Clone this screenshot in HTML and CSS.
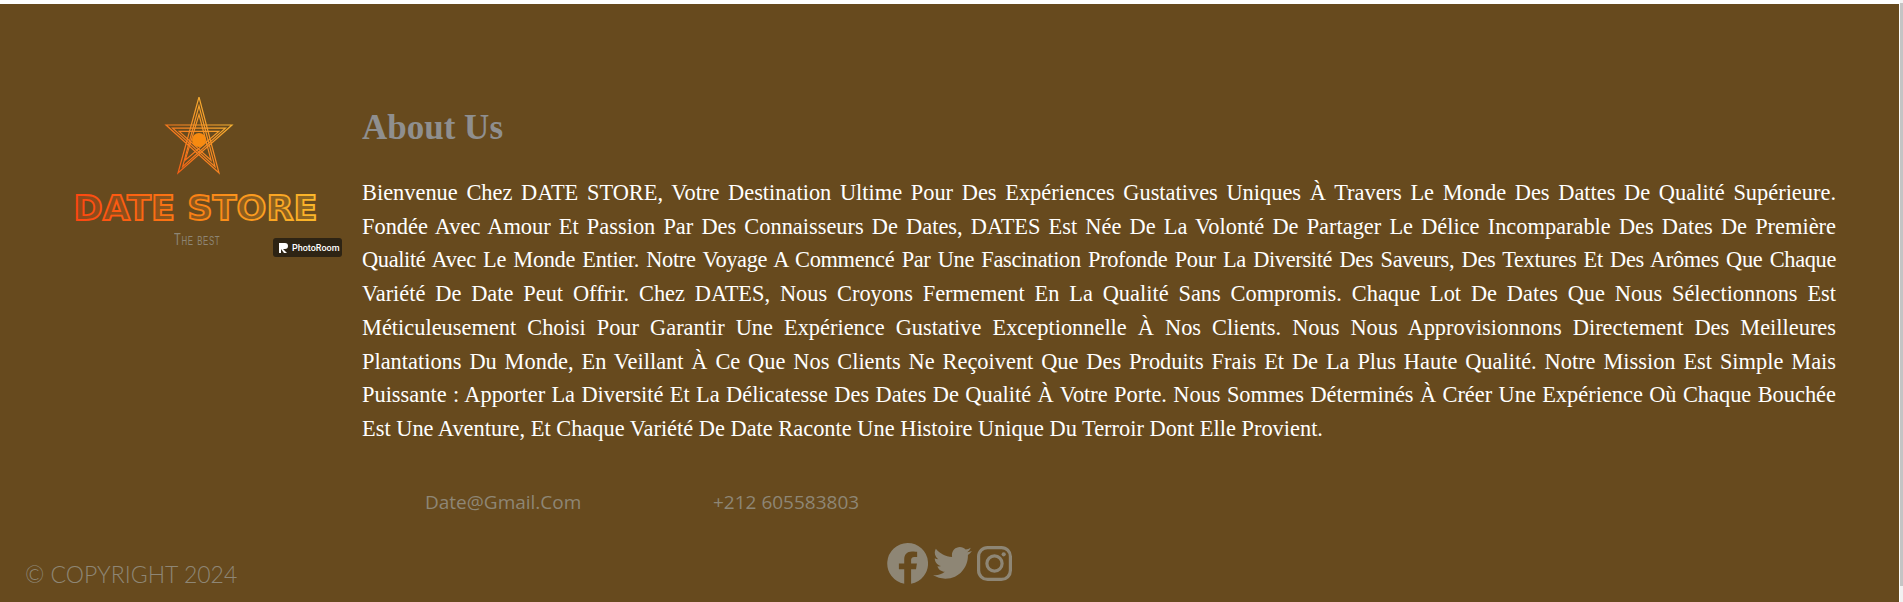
FILE: index.html
```html
<!DOCTYPE html>
<html lang="fr">
<head>
    <meta charset="UTF-8">
    <meta name="viewport" content="width=device-width, initial-scale=1.0">
    <title>Date Store - About Us</title>
    <link rel="stylesheet" href="styles.css">
</head>
<body>
    <footer class="footer">
        <div class="about-row">
            <div class="logo">
                <svg class="logo-art" width="250" height="130" viewBox="0 0 250 130">
                    <defs>
                        <linearGradient id="logoGrad" x1="0" y1="0" x2="244" y2="0" gradientUnits="userSpaceOnUse">
                            <stop offset="0" stop-color="#ff4510"/>
                            <stop offset="0.5" stop-color="#fb8114"/>
                            <stop offset="1" stop-color="#fbb92b"/>
                        </linearGradient>
                        <linearGradient id="starGrad" x1="95" y1="70" x2="158" y2="15" gradientUnits="userSpaceOnUse">
                            <stop offset="0" stop-color="#f55a12"/>
                            <stop offset="1" stop-color="#f7bb35"/>
                        </linearGradient>
                    </defs>
                    <g fill="none" stroke="url(#starGrad)" stroke-width="1.200">
                        <path d="M126 0 L146 76 L93 28 L159 28 L105 76 Z"/>
                        <path d="M126 8.800 L142 69.600 L99.600 31.200 L152.400 31.200 L109.600 69.600 Z"/>
                        <path d="M126 17.600 L138 63.200 L106.200 34.400 L145.800 34.400 L112.200 63.200 Z"/>
                    </g>
                    <circle cx="126" cy="43" r="7" fill="#f78a10"/>
                    <text class="logo-name" x="122.500" y="123" text-anchor="middle" textLength="244" lengthAdjust="spacingAndGlyphs">DATE STORE</text>
                </svg>
                <span class="logo-tag">The best</span>
                <span class="photoroom">
                    <svg width="9" height="10" viewBox="0 0 9 10"><path d="M0 0H6A3 3 0 0 1 6 6H4L8 10H5L2 6V10H0Z" fill="#fff"/></svg>
                    PhotoRoom
                </span>
            </div>
            <div class="about">
                <h2>About Us</h2>
                <p>
                    <span class="line">Bienvenue Chez DATE STORE, Votre Destination Ultime Pour Des Expériences Gustatives Uniques À Travers Le Monde Des Dattes De Qualité Supérieure.</span>
                    <span class="line">Fondée Avec Amour Et Passion Par Des Connaisseurs De Dates, DATES Est Née De La Volonté De Partager Le Délice Incomparable Des Dates De Première</span>
                    <span class="line line-tight">Qualité Avec Le Monde Entier. Notre Voyage A Commencé Par Une Fascination Profonde Pour La Diversité Des Saveurs, Des Textures Et Des Arômes Que Chaque</span>
                    <span class="line">Variété De Date Peut Offrir. Chez DATES, Nous Croyons Fermement En La Qualité Sans Compromis. Chaque Lot De Dates Que Nous Sélectionnons Est</span>
                    <span class="line">Méticuleusement Choisi Pour Garantir Une Expérience Gustative Exceptionnelle À Nos Clients. Nous Nous Approvisionnons Directement Des Meilleures</span>
                    <span class="line">Plantations Du Monde, En Veillant À Ce Que Nos Clients Ne Reçoivent Que Des Produits Frais Et De La Plus Haute Qualité. Notre Mission Est Simple Mais</span>
                    <span class="line">Puissante : Apporter La Diversité Et La Délicatesse Des Dates De Qualité À Votre Porte. Nous Sommes Déterminés À Créer Une Expérience Où Chaque Bouchée</span>
                    <span class="line line-last">Est Une Aventure, Et Chaque Variété De Date Raconte Une Histoire Unique Du Terroir Dont Elle Provient.</span>
                </p>
            </div>
        </div>
        <div class="contact">
            <span class="contact-mail">Date@Gmail.Com</span>
            <span class="contact-phone">+212 605583803</span>
        </div>
        <div class="bottom-row">
            <span class="copyright">© COPYRIGHT 2024</span>
            <div class="socials">
                <svg width="41" height="41" viewBox="0 0 40 40"><path fill-rule="evenodd" d="M20 0A20 20 0 0 1 23.500 39.700V25.500H28.300L29.200 20H23.500V16.600C23.500 15 24.300 13.600 26.600 13.600H29.400V8.600C29.400 8.600 26.800 8.200 24.400 8.200 19.400 8.200 16.800 11.200 16.800 16V20H11.600V25.500H16.800V39.700A20 20 0 0 1 20 0Z"/></svg>
                <svg width="39" height="32" viewBox="0 0 40 33"><path d="M35.900 8.200C35.900 8.600 35.900 9 35.900 9.300 35.900 20.200 27.600 32.700 12.600 32.700 8 32.700 3.700 31.400 0 29 .7 29.100 1.300 29.100 2 29.100 5.800 29.100 9.300 27.800 12.100 25.600 8.500 25.500 5.500 23.200 4.500 19.900 5 20 5.500 20 6 20 6.700 20 7.500 19.900 8.200 19.700 4.500 19 1.700 15.700 1.700 11.700V11.600C2.800 12.200 4 12.600 5.400 12.700 3.200 11.200 1.700 8.700 1.700 5.800 1.700 4.300 2.100 2.900 2.800 1.700 6.800 6.600 12.800 9.900 19.600 10.200 19.500 9.600 19.400 9 19.400 8.400 19.400 3.800 23.100 .1 27.600 .1 30 .1 32.100 1.100 33.600 2.700 35.500 2.300 37.200 1.600 38.800 .7 38.200 2.600 36.900 4.300 35.200 5.300 36.900 5.100 38.500 4.600 40 4 38.900 5.600 37.500 7 35.900 8.200Z"/></svg>
                <svg class="insta" width="35" height="35" viewBox="0 0 35 35"><rect x="1.600" y="1.600" width="31.800" height="31.800" rx="9"/><circle cx="17.500" cy="17.500" r="7.600"/><circle class="insta-dot" cx="26.700" cy="8.300" r="2.100"/></svg>
            </div>
        </div>
    </footer>
    <div class="scrollbar"><div class="scrollbar-thumb"></div></div>
</body>
</html>
```

FILE: styles.css
```css
* {
    box-sizing: border-box;
    margin: 0;
    padding: 0;
}
html {
    height: 100%;
    background: #fff;
    overflow: hidden;
}
body {
    padding: 4px 4px 0 0;
}
.footer {
    height: 598px;
    background: #674a1e;
    display: flex;
    flex-direction: column;
}
.about-row {
    display: flex;
    padding: 93px 63px 0 0;
}
.logo {
    position: relative;
    flex: 0 0 362px;
    padding-left: 73px;
}
.logo-art {
    display: block;
}
.logo-name {
    font-family: "DejaVu Sans", sans-serif;
    font-size: 34px;
    font-weight: 700;
    fill: url(#logoGrad);
    fill-opacity: 0.25;
    stroke: url(#logoGrad);
    stroke-width: 1.800;
}
.logo-tag {
    position: absolute;
    left: 174px;
    top: 133px;
    font-family: "Liberation Sans", sans-serif;
    font-size: 17px;
    font-variant: small-caps;
    letter-spacing: 1px;
    color: #8e8675;
    white-space: nowrap;
    transform: scaleX(0.65);
    transform-origin: left;
}
.photoroom {
    position: absolute;
    left: 273px;
    top: 141px;
    width: 69px;
    height: 19px;
    border-radius: 3px;
    background: #2e2414;
    color: #fff;
    font-family: "Roboto", sans-serif;
    font-size: 9px;
    font-weight: 500;
    display: flex;
    align-items: center;
    gap: 4px;
    padding-left: 6px;
}
.about {
    flex: 1;
    padding-top: 9px;
}
.about h2 {
    font-family: "Liberation Serif", serif;
    font-size: 35px;
    font-weight: 700;
    line-height: 44px;
    color: #8f8f8f;
    margin-bottom: 26px;
}
.about p {
    font-family: "Liberation Serif", serif;
    font-size: 22.4px;
    line-height: 33.7px;
    color: #fff;
}
.line {
    display: block;
    white-space: nowrap;
    text-align: justify;
    text-align-last: justify;
}
.line-tight {
    letter-spacing: -0.35px;
}
.line-last {
    text-align-last: left;
}
.contact {
    display: flex;
    font-family: "Open Sans", sans-serif;
    font-size: 19px;
    line-height: 26px;
    color: #8e8675;
    padding: 43px 0 0 425px;
}
.contact-mail {
    flex: 0 0 288px;
}
.bottom-row {
    display: flex;
    padding: 24px 0 0 25px;
}
.copyright {
    flex: 0 0 862px;
    margin-top: 21px;
    font-family: "Lato", sans-serif;
    font-weight: 300;
    font-size: 23px;
    line-height: 28px;
    color: #8e8675;
}
.socials {
    display: flex;
    align-items: center;
    gap: 5px;
    fill: #8e8675;
}
.insta {
    fill: none;
    stroke: #8e8675;
    stroke-width: 3.200;
}
.insta-dot {
    fill: #8e8675;
    stroke: none;
}
.scrollbar {
    position: fixed;
    top: 0;
    right: 0;
    bottom: 0;
    width: 3px;
    background: #f1f1f1;
}
.scrollbar-thumb {
    height: 583px;
    margin-top: 3px;
    background: #c4c4c4;
}
```
